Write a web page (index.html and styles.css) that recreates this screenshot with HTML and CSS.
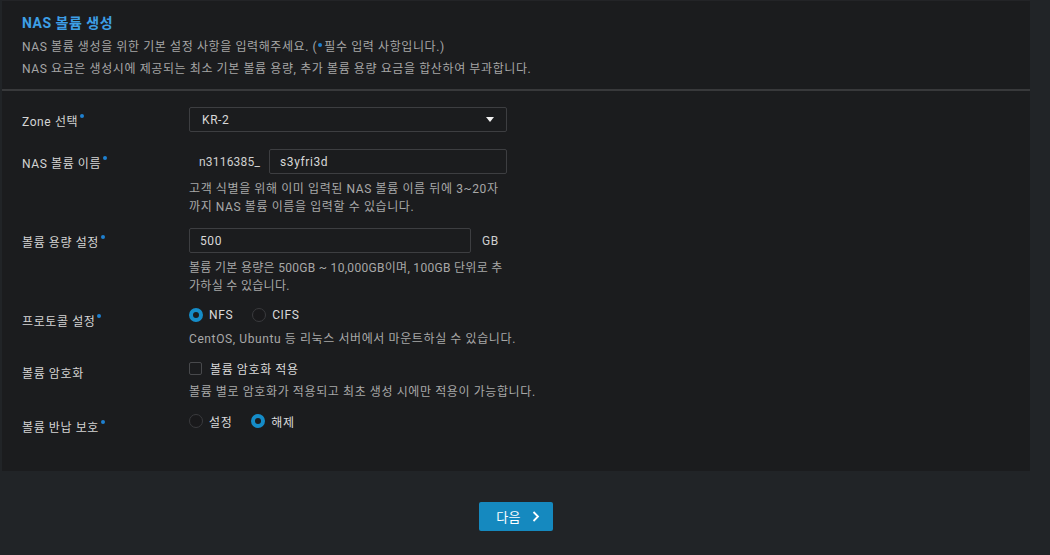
FILE: index.html
```html
<!DOCTYPE html>
<html lang="ko">
<head>
    <meta charset="UTF-8">
    <title>NAS 볼륨 생성</title>
    <link rel="stylesheet" href="styles.css">
</head>
<body>
    <div class="panel">
        <div class="panel-head">
            <h1>NAS 볼륨 생성</h1>
            <p>NAS 볼륨 생성을 위한 기본 설정 사항을 입력해주세요. (<span class="req-dot"></span>필수 입력 사항입니다.)</p>
            <p>NAS 요금은 생성시에 제공되는 최소 기본 볼륨 용량, 추가 볼륨 용량 요금을 합산하여 부과합니다.</p>
        </div>

        <div class="form">
            <div class="row row-first">
                <div class="label">Zone 선택<span class="req"></span></div>
                <div class="field">
                    <div class="select">
                        <span>KR-2</span>
                        <span class="caret"></span>
                    </div>
                </div>
            </div>

            <div class="row">
                <div class="label">NAS 볼륨 이름<span class="req"></span></div>
                <div class="field">
                    <div class="name-line">
                        <span class="prefix">n3116385_</span>
                        <input class="input name-input" type="text" value="s3yfri3d">
                    </div>
                    <div class="help">고객 식별을 위해 이미 입력된 NAS 볼륨 이름 뒤에 3~20자까지 NAS 볼륨 이름을 입력할 수 있습니다.</div>
                </div>
            </div>

            <div class="row">
                <div class="label">볼륨 용량 설정<span class="req"></span></div>
                <div class="field">
                    <div class="size-line">
                        <input class="input size-input" type="text" value="500">
                        <span class="unit">GB</span>
                    </div>
                    <div class="help help-tight">볼륨 기본 용량은 500GB ~ 10,000GB이며, 100GB 단위로 추가하실 수 있습니다.</div>
                </div>
            </div>

            <div class="row">
                <div class="label">프로토콜 설정<span class="req"></span></div>
                <div class="field">
                    <div class="options">
                        <label class="opt"><span class="radio on"></span>NFS</label>
                        <label class="opt"><span class="radio"></span>CIFS</label>
                    </div>
                    <div class="help help-opt">CentOS, Ubuntu 등 리눅스 서버에서 마운트하실 수 있습니다.</div>
                </div>
            </div>

            <div class="row">
                <div class="label">볼륨 암호화</div>
                <div class="field">
                    <div class="options">
                        <label class="opt"><span class="check"></span>볼륨 암호화 적용</label>
                    </div>
                    <div class="help help-opt">볼륨 별로 암호화가 적용되고 최초 생성 시에만 적용이 가능합니다.</div>
                </div>
            </div>

            <div class="row">
                <div class="label">볼륨 반납 보호<span class="req"></span></div>
                <div class="field">
                    <div class="options">
                        <label class="opt"><span class="radio"></span>설정</label>
                        <label class="opt"><span class="radio on"></span>해제</label>
                    </div>
                </div>
            </div>
        </div>
    </div>

    <div class="actions">
        <button class="next">다음
            <svg width="8" height="11" viewBox="0 0 8 11"><path d="M1.5 1 L6 5.5 L1.5 10" fill="none" stroke="#fff" stroke-width="1.8"/></svg>
        </button>
    </div>
</body>
</html>
```

FILE: styles.css
```css
body {
    margin: 0;
    background-color: #212427;
    font-family: Roboto, "Noto Sans CJK KR", sans-serif;
    font-size: 12px;
    letter-spacing: 0.6px;
    color: #d2d2d2;
    height: 555px;
    overflow: hidden;
}
.panel {
    margin-left: 2px;
    width: 1028px;
    background-color: #1b1c1e;
    border-top: 1px solid #232427;
}
.panel-head {
    padding: 12px 20px 9px;
    border-bottom: 2px solid #38393b;
}
.panel-head h1 {
    margin: 0 0 3px;
    font-size: 14px;
    line-height: 20px;
    font-weight: bold;
    letter-spacing: 0.5px;
    color: #3d9fe6;
}
.panel-head p {
    margin: 0;
    line-height: 22px;
    color: #a6a6a6;
}
.req-dot {
    display: inline-block;
    width: 4px;
    height: 4px;
    border-radius: 50%;
    background-color: #1e80d0;
    vertical-align: 4px;
    margin: 0 2px 0 1px;
}
.form {
    padding: 16px 20px 36px;
    display: flex;
    flex-direction: column;
    gap: 12px;
}
.row {
    display: grid;
    grid-template-columns: 167px 318px;
}
.row-first {
    margin-bottom: 5px;
}
.label {
    padding-top: 7px;
    line-height: 14px;
    color: #d4d4d4;
}
.req {
    display: inline-block;
    width: 4px;
    height: 4px;
    border-radius: 50%;
    background-color: #1e80d0;
    vertical-align: 8px;
    margin-left: 2px;
}
.select {
    height: 25px;
    box-sizing: border-box;
    border: 1px solid #3d3e41;
    border-radius: 2px;
    display: flex;
    align-items: center;
    justify-content: space-between;
    padding: 0 12px 0 12px;
    color: #d8d8d8;
}
.caret {
    width: 0;
    height: 0;
    border-left: 4px solid transparent;
    border-right: 4px solid transparent;
    border-top: 5px solid #f2f2f2;
}
.input {
    height: 25px;
    box-sizing: border-box;
    border: 1px solid #3d3e41;
    border-radius: 2px;
    background-color: #1b1c1e;
    color: #d8d8d8;
    font-family: inherit;
    font-size: 12px;
    letter-spacing: 0.6px;
    padding: 0 10px;
    outline: none;
}
.name-line, .size-line {
    display: flex;
    align-items: center;
}
.prefix {
    width: 80px;
    padding-left: 10px;
    box-sizing: border-box;
    letter-spacing: 0.2px;
    color: #cfcfcf;
}
.name-input {
    width: 238px;
}
.size-input {
    width: 282px;
}
.unit {
    margin-left: 11px;
    color: #cfcfcf;
}
.help {
    margin-top: 6px;
    line-height: 18px;
    color: #a8a8a8;
    word-break: break-all;
}
.help-tight {
    letter-spacing: 0.3px;
}
.help-opt {
    margin-top: 7px;
    white-space: nowrap;
}
.options {
    display: flex;
    align-items: center;
    height: 16px;
    gap: 19px;
}
.opt {
    display: flex;
    align-items: center;
    gap: 6px;
    color: #dadada;
}
.radio {
    width: 14px;
    height: 14px;
    box-sizing: border-box;
    border-radius: 50%;
    border: 1px solid #3a3b3e;
    background-color: #19191b;
}
.radio.on {
    border: 4px solid #158cc8;
    background-color: #1b1c1e;
}
.check {
    width: 13px;
    height: 13px;
    box-sizing: border-box;
    border: 1px solid #48494c;
    border-radius: 2px;
    margin-right: 2px;
}
.actions {
    margin-left: 2px;
    width: 1028px;
    display: flex;
    justify-content: center;
    padding-top: 31px;
}
.next {
    width: 74px;
    height: 29px;
    border: none;
    border-radius: 2px;
    background-color: #1589bf;
    color: #ffffff;
    font-family: inherit;
    font-size: 13px;
    letter-spacing: 0.3px;
    display: flex;
    align-items: center;
    justify-content: center;
    gap: 11px;
    padding: 0 0 0 4px;
}
```
